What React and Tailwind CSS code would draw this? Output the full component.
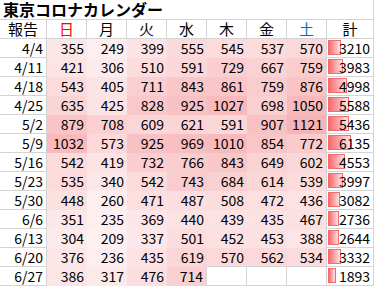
import React from "react";

const data = [
  ["4/4", [355, 249, 399, 555, 545, 537, 570], 3210],
  ["4/11", [421, 306, 510, 591, 729, 667, 759], 3983],
  ["4/18", [543, 405, 711, 843, 861, 759, 876], 4998],
  ["4/25", [635, 425, 828, 925, 1027, 698, 1050], 5588],
  ["5/2", [879, 708, 609, 621, 591, 907, 1121], 5436],
  ["5/9", [1032, 573, 925, 969, 1010, 854, 772], 6135],
  ["5/16", [542, 419, 732, 766, 843, 649, 602], 4553],
  ["5/23", [535, 340, 542, 743, 684, 614, 539], 3997],
  ["5/30", [448, 260, 471, 487, 508, 472, 436], 3082],
  ["6/6", [351, 235, 369, 440, 439, 435, 467], 2736],
  ["6/13", [304, 209, 337, 501, 452, 453, 388], 2644],
  ["6/20", [376, 236, 435, 619, 570, 562, 534], 3332],
  ["6/27", [386, 317, 476, 714, null, null, null], 1893],
];

const MIN = 209;
const MAX = 1121;
const LO = [253, 241, 242];
const HI = [247, 180, 182];

function heat(v) {
  const t = Math.max(0, Math.min(1, (v - MIN) / (MAX - MIN)));
  const c = LO.map((l, i) => Math.round(l + (HI[i] - l) * t));
  return `rgb(${c[0]},${c[1]},${c[2]})`;
}

const days = [
  { t: "日", c: "text-[#ff0000]" },
  { t: "月", c: "text-black" },
  { t: "火", c: "text-black" },
  { t: "水", c: "text-black" },
  { t: "木", c: "text-black" },
  { t: "金", c: "text-black" },
  { t: "土", c: "text-[#0070c0]" },
];

const font = { fontFamily: '"Noto Sans CJK JP", "Noto Sans", sans-serif' };

export default function App() {
  return (
    <div
      className="w-[374px] h-[286px] bg-white overflow-hidden text-black"
      style={font}
    >
      <div className="grid grid-cols-[47px_repeat(7,40px)_47px]">
        <div className="col-span-9 h-[20px] border-b border-r border-[#d4d4d4] pl-[3px] text-[16px] font-bold leading-[19px] whitespace-nowrap">
          東京コロナカレンダー
        </div>
        <div className="h-[19px] border-b border-r border-[#d4d4d4] text-center text-[15px] leading-[18px]">
          報告
        </div>
        {days.map((d) => (
          <div
            key={d.t}
            className={`h-[19px] border-b border-r border-[#d4d4d4] text-center text-[15px] leading-[18px] ${d.c}`}
          >
            {d.t}
          </div>
        ))}
        <div className="h-[19px] border-b border-r border-[#d4d4d4] text-center text-[15px] leading-[18px]">
          計
        </div>
        {data.map(([date, vals, total], ri) => {
          const next = data[ri + 1];
          return (
            <React.Fragment key={date}>
              <div className="h-[19px] border-b border-r border-[#d4d4d4] text-right pr-[3px] text-[14px] leading-[18px]">
                {date}
              </div>
              {vals.map((v, ci) => {
                if (v === null) {
                  return (
                    <div
                      key={ci}
                      className="h-[19px] border-b border-r border-[#d4d4d4] bg-white"
                    />
                  );
                }
                const rightEmpty = ci === 6 || vals[ci + 1] === null;
                const belowEmpty = next && next[1][ci] === null;
                return (
                  <div
                    key={ci}
                    className={`h-[19px] text-right pr-[3px] text-[14px] leading-[18px] border-[#d4d4d4] ${
                      rightEmpty ? "border-r" : ""
                    } ${belowEmpty ? "border-b" : ""}`}
                    style={{ backgroundColor: heat(v) }}
                  >
                    {v}
                  </div>
                );
              })}
              <div className="relative h-[19px] border-b border-r border-[#d4d4d4] text-right pr-[3px] text-[14px] leading-[18px]">
                <div
                  className="absolute left-[1px] top-[1px] h-[15px] border border-[#f8696b] bg-[linear-gradient(to_right,#f8696b,#fde4e5)]"
                  style={{ width: `${Math.round(1.3 + total * 0.003536)}px` }}
                />
                <span className="relative">{total}</span>
              </div>
            </React.Fragment>
          );
        })}
      </div>
    </div>
  );
}
